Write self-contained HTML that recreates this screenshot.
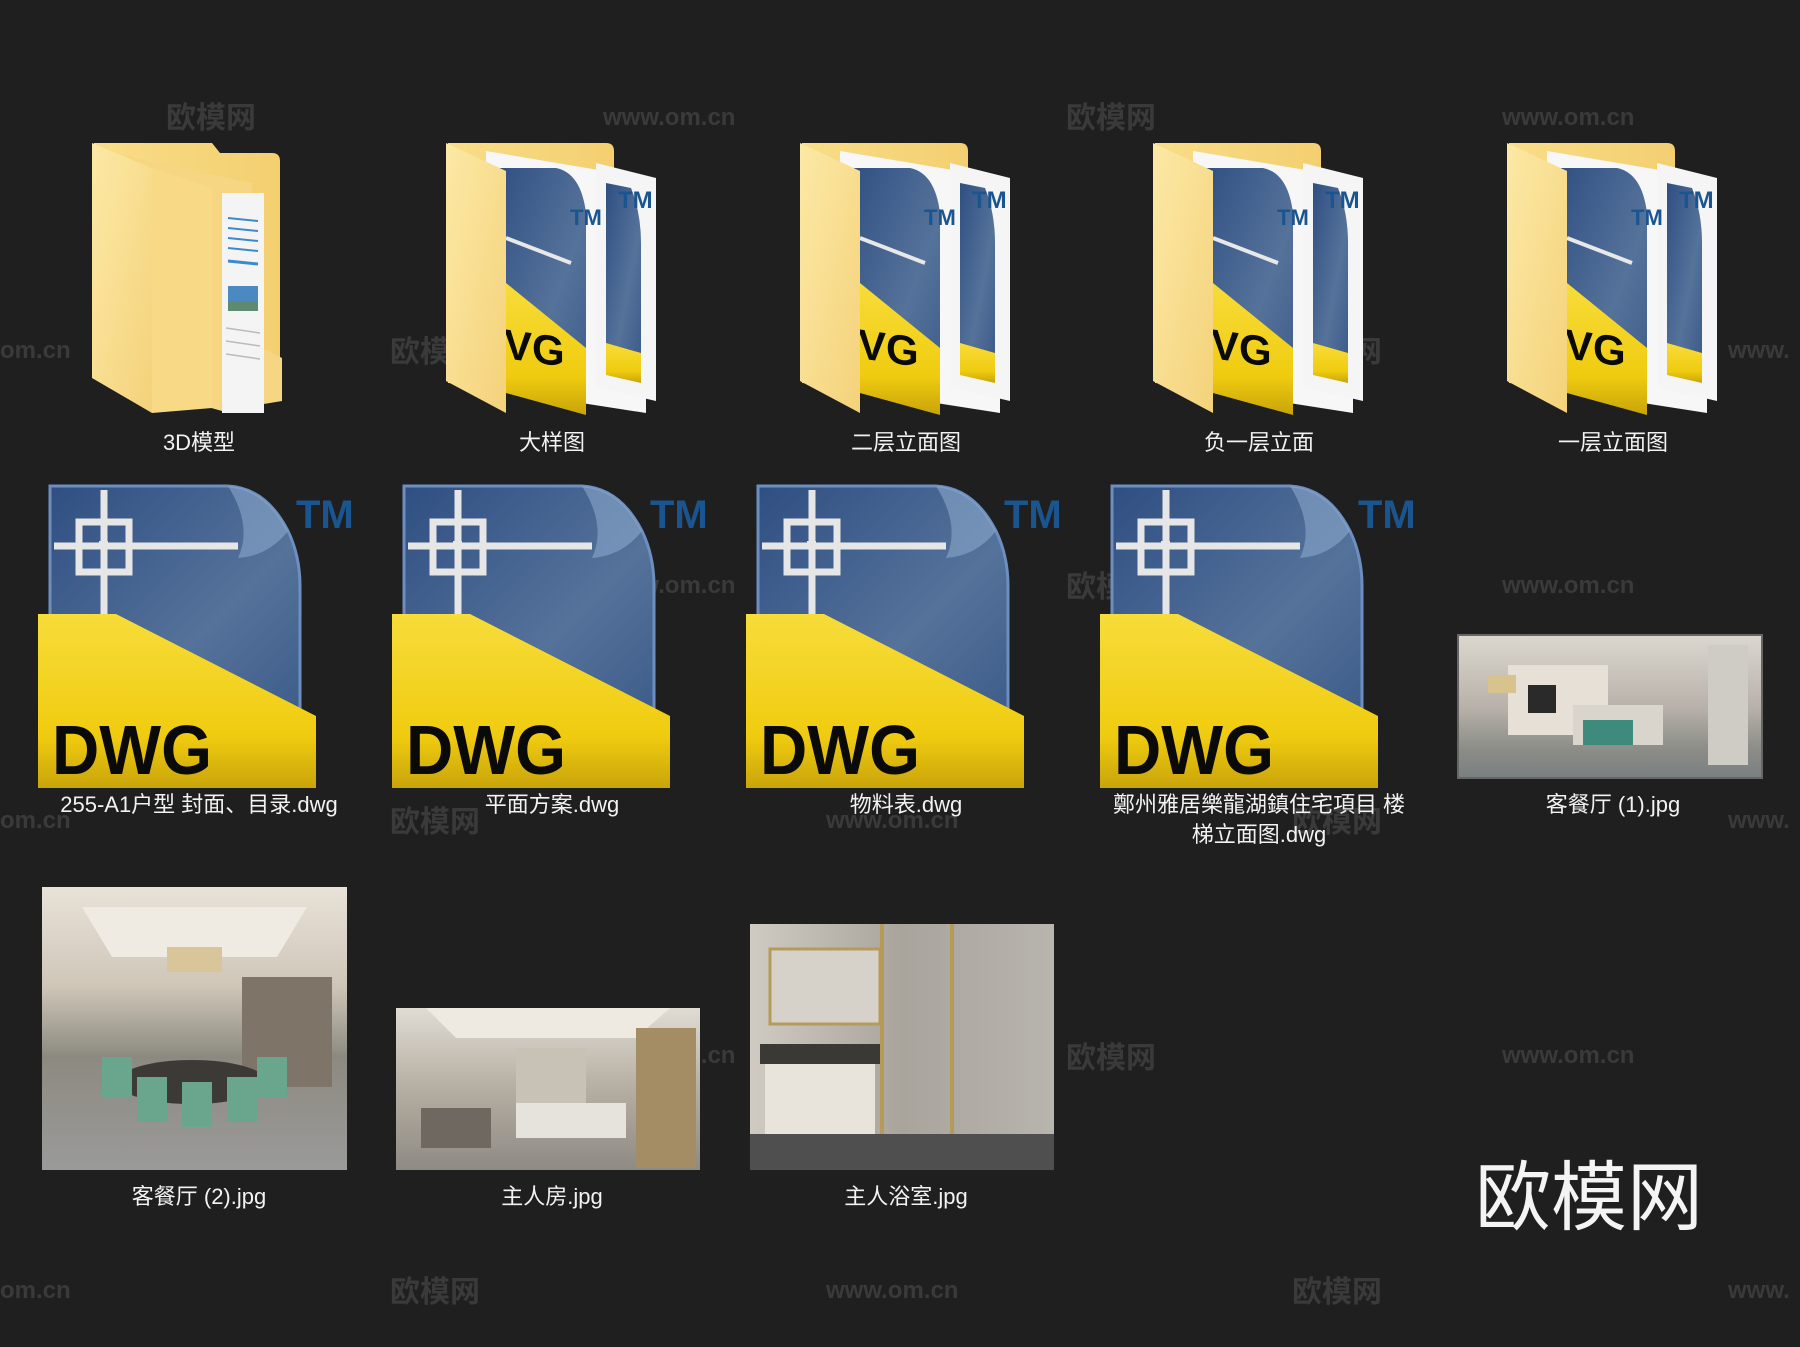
<!DOCTYPE html>
<html><head><meta charset="utf-8"><style>
html,body{margin:0;padding:0;background:#1f1f1f;}
svg{display:block}
.lb{font-family:"Liberation Sans","Noto Sans CJK SC",sans-serif;font-size:22px;fill:#f2f2f2;text-anchor:middle}
.wm{font-family:"Liberation Sans","Noto Sans CJK SC",sans-serif;font-size:30px;fill:#3a3a3a;font-weight:bold}
.dwg{font-family:"Liberation Sans",sans-serif;font-weight:bold;fill:#0a0a0a}
.tm{font-family:"Liberation Sans",sans-serif;font-weight:bold;fill:#1a5590}
</style></head><body>
<svg width="1800" height="1347" viewBox="0 0 1800 1347" xmlns="http://www.w3.org/2000/svg">
<defs>
<linearGradient id="blue" x1="0" y1="0" x2="1" y2="1"><stop offset="0" stop-color="#2f4f82"/><stop offset="0.6" stop-color="#55729a"/><stop offset="1" stop-color="#3b5a88"/></linearGradient>
<linearGradient id="yel" x1="0" y1="0" x2="0" y2="1"><stop offset="0" stop-color="#f7dc3a"/><stop offset="0.7" stop-color="#f0cc10"/><stop offset="1" stop-color="#c9a40a"/></linearGradient>
<linearGradient id="fold" x1="0" y1="0" x2="1" y2="0"><stop offset="0" stop-color="#f9dd88"/><stop offset="1" stop-color="#f3cf70"/></linearGradient>
<linearGradient id="front" x1="0" y1="0" x2="1" y2="1"><stop offset="0" stop-color="#fce9a6"/><stop offset="1" stop-color="#f4d27a"/></linearGradient>
<linearGradient id="room1" x1="0" y1="0" x2="0" y2="1"><stop offset="0" stop-color="#dcd7cf"/><stop offset="0.5" stop-color="#b8b2aa"/><stop offset="0.8" stop-color="#8c8d88"/><stop offset="1" stop-color="#7a7f80"/></linearGradient>
<linearGradient id="room2" x1="0" y1="0" x2="0" y2="1"><stop offset="0" stop-color="#e8e2d8"/><stop offset="0.35" stop-color="#cfc6b8"/><stop offset="0.6" stop-color="#8c8a80"/><stop offset="1" stop-color="#9a9a9a"/></linearGradient>
<linearGradient id="room3" x1="0" y1="0" x2="0" y2="1"><stop offset="0" stop-color="#e0dcd4"/><stop offset="0.5" stop-color="#b5aea2"/><stop offset="1" stop-color="#8e8a84"/></linearGradient>
<linearGradient id="room4" x1="0" y1="0" x2="1" y2="0"><stop offset="0" stop-color="#cfcac2"/><stop offset="0.5" stop-color="#a9a49c"/><stop offset="1" stop-color="#b8b4ae"/></linearGradient>
</defs>

<g class="wm">
<text x="166" y="128">欧模网</text><text x="603" y="125" font-size="24">www.om.cn</text><text x="1066" y="128">欧模网</text><text x="1502" y="125" font-size="24">www.om.cn</text>
<text x="0" y="358" font-size="24">om.cn</text><text x="390" y="362">欧模网</text><text x="826" y="358" font-size="24">www.om.cn</text><text x="1292" y="362">欧模网</text><text x="1728" y="358" font-size="24">www.</text>
<text x="166" y="597">欧模网</text><text x="603" y="593" font-size="24">www.om.cn</text><text x="1066" y="597">欧模网</text><text x="1502" y="593" font-size="24">www.om.cn</text>
<text x="0" y="828" font-size="24">om.cn</text><text x="390" y="832">欧模网</text><text x="826" y="828" font-size="24">www.om.cn</text><text x="1292" y="832">欧模网</text><text x="1728" y="828" font-size="24">www.</text>
<text x="166" y="1068">欧模网</text><text x="603" y="1063" font-size="24">www.om.cn</text><text x="1066" y="1068">欧模网</text><text x="1502" y="1063" font-size="24">www.om.cn</text>
<text x="0" y="1298" font-size="24">om.cn</text><text x="390" y="1302">欧模网</text><text x="826" y="1298" font-size="24">www.om.cn</text><text x="1292" y="1302">欧模网</text><text x="1728" y="1298" font-size="24">www.</text>
</g>

<g transform="translate(92,143)">
<path d="M2,0 H120 L128,10 H180 Q188,10 188,18 V240 Q188,248 180,250 L110,262 L2,230 Z" fill="url(#fold)"/>
<path d="M30,12 L160,40 V200 L190,215 V258 L130,268 L30,240 Z" fill="#f6d683"/>
<rect x="130" y="50" width="42" height="220" fill="#f4f4f4"/>
<g stroke="#3a8ad0" stroke-width="2"><line x1="136" y1="75" x2="166" y2="78"/><line x1="136" y1="85" x2="166" y2="88"/><line x1="136" y1="95" x2="166" y2="98"/><line x1="136" y1="105" x2="166" y2="108"/><line x1="136" y1="118" x2="166" y2="121" stroke-width="3"/></g>
<rect x="136" y="143" width="30" height="25" fill="#4a8ac0"/><rect x="136" y="158" width="30" height="10" fill="#5d8a70"/>
<g stroke="#bbb" stroke-width="1.5"><line x1="134" y1="185" x2="168" y2="190"/><line x1="134" y1="198" x2="168" y2="203"/><line x1="134" y1="211" x2="168" y2="216"/></g>
<path d="M0,0 L60,25 V270 L0,235 Z" fill="url(#front)"/>
<path d="M60,25 L120,45 V265 L60,270 Z" fill="#f8da86"/>
</g>

<g transform="translate(446,143)">
<path d="M2,0 H160 Q168,0 168,8 V250 L2,240 Z" fill="url(#fold)"/>
<path d="M40,8 L200,35 V270 L40,245 Z" fill="#f7f7f7"/>
<path d="M150,20 L210,35 V258 L150,244 Z" fill="#f5f5f5"/>
<path d="M160,40 L185,45 Q195,70 195,100 V225 L160,220 Z" fill="url(#blue)"/>
<path d="M160,200 L195,210 V240 L160,232 Z" fill="url(#yel)"/>
<path d="M48,25 H110 Q135,30 140,70 V270 L60,250 V30 Z" fill="url(#blue)"/>
<line x1="60" y1="95" x2="125" y2="120" stroke="#e8e8e8" stroke-width="4"/>
<path d="M60,140 L140,205 V272 L60,250 Z" fill="url(#yel)"/>
<text class="dwg" x="58" y="242" font-size="42" transform="skewY(8) translate(0,-35)">VG</text>
<text class="tm" x="124" y="82" font-size="22" fill="#1a6a5a">TM</text>
<text class="tm" x="172" y="65" font-size="24" fill="#1a6a5a">TM</text>
<path d="M0,0 L60,28 V270 L0,238 Z" fill="url(#front)"/>
</g>
<g transform="translate(800,143)">
<path d="M2,0 H160 Q168,0 168,8 V250 L2,240 Z" fill="url(#fold)"/>
<path d="M40,8 L200,35 V270 L40,245 Z" fill="#f7f7f7"/>
<path d="M150,20 L210,35 V258 L150,244 Z" fill="#f5f5f5"/>
<path d="M160,40 L185,45 Q195,70 195,100 V225 L160,220 Z" fill="url(#blue)"/>
<path d="M160,200 L195,210 V240 L160,232 Z" fill="url(#yel)"/>
<path d="M48,25 H110 Q135,30 140,70 V270 L60,250 V30 Z" fill="url(#blue)"/>
<line x1="60" y1="95" x2="125" y2="120" stroke="#e8e8e8" stroke-width="4"/>
<path d="M60,140 L140,205 V272 L60,250 Z" fill="url(#yel)"/>
<text class="dwg" x="58" y="242" font-size="42" transform="skewY(8) translate(0,-35)">VG</text>
<text class="tm" x="124" y="82" font-size="22" fill="#1a6a5a">TM</text>
<text class="tm" x="172" y="65" font-size="24" fill="#1a6a5a">TM</text>
<path d="M0,0 L60,28 V270 L0,238 Z" fill="url(#front)"/>
</g>
<g transform="translate(1153,143)">
<path d="M2,0 H160 Q168,0 168,8 V250 L2,240 Z" fill="url(#fold)"/>
<path d="M40,8 L200,35 V270 L40,245 Z" fill="#f7f7f7"/>
<path d="M150,20 L210,35 V258 L150,244 Z" fill="#f5f5f5"/>
<path d="M160,40 L185,45 Q195,70 195,100 V225 L160,220 Z" fill="url(#blue)"/>
<path d="M160,200 L195,210 V240 L160,232 Z" fill="url(#yel)"/>
<path d="M48,25 H110 Q135,30 140,70 V270 L60,250 V30 Z" fill="url(#blue)"/>
<line x1="60" y1="95" x2="125" y2="120" stroke="#e8e8e8" stroke-width="4"/>
<path d="M60,140 L140,205 V272 L60,250 Z" fill="url(#yel)"/>
<text class="dwg" x="58" y="242" font-size="42" transform="skewY(8) translate(0,-35)">VG</text>
<text class="tm" x="124" y="82" font-size="22" fill="#1a6a5a">TM</text>
<text class="tm" x="172" y="65" font-size="24" fill="#1a6a5a">TM</text>
<path d="M0,0 L60,28 V270 L0,238 Z" fill="url(#front)"/>
</g>
<g transform="translate(1507,143)">
<path d="M2,0 H160 Q168,0 168,8 V250 L2,240 Z" fill="url(#fold)"/>
<path d="M40,8 L200,35 V270 L40,245 Z" fill="#f7f7f7"/>
<path d="M150,20 L210,35 V258 L150,244 Z" fill="#f5f5f5"/>
<path d="M160,40 L185,45 Q195,70 195,100 V225 L160,220 Z" fill="url(#blue)"/>
<path d="M160,200 L195,210 V240 L160,232 Z" fill="url(#yel)"/>
<path d="M48,25 H110 Q135,30 140,70 V270 L60,250 V30 Z" fill="url(#blue)"/>
<line x1="60" y1="95" x2="125" y2="120" stroke="#e8e8e8" stroke-width="4"/>
<path d="M60,140 L140,205 V272 L60,250 Z" fill="url(#yel)"/>
<text class="dwg" x="58" y="242" font-size="42" transform="skewY(8) translate(0,-35)">VG</text>
<text class="tm" x="124" y="82" font-size="22" fill="#1a6a5a">TM</text>
<text class="tm" x="172" y="65" font-size="24" fill="#1a6a5a">TM</text>
<path d="M0,0 L60,28 V270 L0,238 Z" fill="url(#front)"/>
</g>

<g class="lb">
<text x="199" y="450">3D模型</text><text x="552" y="450">大样图</text><text x="906" y="450">二层立面图</text><text x="1259" y="450">负一层立面</text><text x="1613" y="450">一层立面图</text>
</g>

<g transform="translate(38,486)">
<path d="M12,0 H190 Q228,2 250,45 Q262,70 262,100 V250 H12 Z" fill="url(#blue)" stroke="#6d8fbf" stroke-width="3"/>
<path d="M190,0 Q228,2 250,45 Q230,70 200,72 Q215,40 190,0 Z" fill="#8aa6cc" opacity="0.6"/>
<g stroke="#e6e6e6" stroke-width="7" fill="none"><line x1="66" y1="4" x2="66" y2="128"/><line x1="16" y1="60" x2="200" y2="60"/><rect x="41" y="36" width="50" height="50"/></g>
<rect x="61" y="55" width="9" height="8" fill="#e6e6e6"/>
<path d="M0,128 H78 L278,230 V302 H0 Z" fill="url(#yel)"/>
<text class="dwg" x="14" y="288" font-size="70" textLength="160" lengthAdjust="spacingAndGlyphs">DWG</text>
<text class="tm" x="258" y="42" font-size="40">TM</text>
</g>
<g transform="translate(392,486)">
<path d="M12,0 H190 Q228,2 250,45 Q262,70 262,100 V250 H12 Z" fill="url(#blue)" stroke="#6d8fbf" stroke-width="3"/>
<path d="M190,0 Q228,2 250,45 Q230,70 200,72 Q215,40 190,0 Z" fill="#8aa6cc" opacity="0.6"/>
<g stroke="#e6e6e6" stroke-width="7" fill="none"><line x1="66" y1="4" x2="66" y2="128"/><line x1="16" y1="60" x2="200" y2="60"/><rect x="41" y="36" width="50" height="50"/></g>
<rect x="61" y="55" width="9" height="8" fill="#e6e6e6"/>
<path d="M0,128 H78 L278,230 V302 H0 Z" fill="url(#yel)"/>
<text class="dwg" x="14" y="288" font-size="70" textLength="160" lengthAdjust="spacingAndGlyphs">DWG</text>
<text class="tm" x="258" y="42" font-size="40">TM</text>
</g>
<g transform="translate(746,486)">
<path d="M12,0 H190 Q228,2 250,45 Q262,70 262,100 V250 H12 Z" fill="url(#blue)" stroke="#6d8fbf" stroke-width="3"/>
<path d="M190,0 Q228,2 250,45 Q230,70 200,72 Q215,40 190,0 Z" fill="#8aa6cc" opacity="0.6"/>
<g stroke="#e6e6e6" stroke-width="7" fill="none"><line x1="66" y1="4" x2="66" y2="128"/><line x1="16" y1="60" x2="200" y2="60"/><rect x="41" y="36" width="50" height="50"/></g>
<rect x="61" y="55" width="9" height="8" fill="#e6e6e6"/>
<path d="M0,128 H78 L278,230 V302 H0 Z" fill="url(#yel)"/>
<text class="dwg" x="14" y="288" font-size="70" textLength="160" lengthAdjust="spacingAndGlyphs">DWG</text>
<text class="tm" x="258" y="42" font-size="40">TM</text>
</g>
<g transform="translate(1100,486)">
<path d="M12,0 H190 Q228,2 250,45 Q262,70 262,100 V250 H12 Z" fill="url(#blue)" stroke="#6d8fbf" stroke-width="3"/>
<path d="M190,0 Q228,2 250,45 Q230,70 200,72 Q215,40 190,0 Z" fill="#8aa6cc" opacity="0.6"/>
<g stroke="#e6e6e6" stroke-width="7" fill="none"><line x1="66" y1="4" x2="66" y2="128"/><line x1="16" y1="60" x2="200" y2="60"/><rect x="41" y="36" width="50" height="50"/></g>
<rect x="61" y="55" width="9" height="8" fill="#e6e6e6"/>
<path d="M0,128 H78 L278,230 V302 H0 Z" fill="url(#yel)"/>
<text class="dwg" x="14" y="288" font-size="70" textLength="160" lengthAdjust="spacingAndGlyphs">DWG</text>
<text class="tm" x="258" y="42" font-size="40">TM</text>
</g>

<g transform="translate(1458,635)">
<rect width="304" height="143" fill="url(#room1)"/>
<rect x="50" y="30" width="100" height="70" fill="#e6e0d6"/>
<rect x="70" y="50" width="28" height="28" fill="#2a2a2a"/>
<rect x="30" y="40" width="28" height="18" fill="#d8c38e"/>
<rect x="115" y="70" width="90" height="40" fill="#d9d5cc"/>
<rect x="125" y="85" width="50" height="25" fill="#3e8a7c"/>
<rect x="250" y="10" width="40" height="120" fill="#cfccc6"/>
<rect x="0" y="0" width="304" height="143" fill="none" stroke="#666" stroke-width="2"/>
</g>
<text class="lb" x="1613" y="812">客餐厅 (1).jpg</text>

<g class="lb">
<text x="199" y="812">255-A1户型 封面、目录.dwg</text>
<text x="552" y="812">平面方案.dwg</text>
<text x="906" y="812">物料表.dwg</text>
<text x="1259" y="812">鄭州雅居樂龍湖鎮住宅項目 楼</text>
<text x="1259" y="842">梯立面图.dwg</text>
</g>

<g transform="translate(42,887)">
<rect width="305" height="283" fill="url(#room2)"/>
<path d="M40,20 H265 L235,70 H70 Z" fill="#f0ebe2"/>
<rect x="125" y="60" width="55" height="25" fill="#d8c59a"/>
<rect x="200" y="90" width="90" height="110" fill="#7f7468"/>
<ellipse cx="150" cy="195" rx="75" ry="22" fill="#3c3a36"/>
<g fill="#6aa58e"><rect x="60" y="170" width="30" height="40"/><rect x="95" y="190" width="30" height="45"/><rect x="140" y="195" width="30" height="45"/><rect x="185" y="190" width="30" height="45"/><rect x="215" y="170" width="30" height="40"/></g>
</g>
<g transform="translate(396,1008)">
<rect width="304" height="162" fill="url(#room3)"/>
<path d="M30,0 H274 L240,30 H60 Z" fill="#eeeae2"/>
<rect x="120" y="40" width="70" height="60" fill="#c8c2b6"/>
<rect x="120" y="95" width="110" height="35" fill="#e6e2dc"/>
<rect x="25" y="100" width="70" height="40" fill="#6e6860"/>
<rect x="240" y="20" width="60" height="140" fill="#a48d64"/>
</g>
<g transform="translate(750,924)">
<rect width="304" height="246" fill="url(#room4)"/>
<rect x="20" y="25" width="110" height="75" fill="#d6d2c9" stroke="#b59a5a" stroke-width="3"/>
<rect x="10" y="120" width="120" height="20" fill="#3a3936"/>
<rect x="15" y="140" width="110" height="90" fill="#e8e4dc"/>
<rect x="130" y="0" width="4" height="246" fill="#b59a5a"/>
<rect x="200" y="0" width="4" height="246" fill="#b59a5a"/>
<rect x="0" y="210" width="304" height="36" fill="#4f4f4f"/>
</g>
<g class="lb">
<text x="199" y="1204">客餐厅 (2).jpg</text><text x="552" y="1204">主人房.jpg</text><text x="906" y="1204">主人浴室.jpg</text>
</g>

<text x="1475" y="1224" font-family="'Liberation Sans','Noto Sans CJK SC',sans-serif" font-size="76" fill="#f4f4f4">欧模网</text>
</svg>
</body></html>
